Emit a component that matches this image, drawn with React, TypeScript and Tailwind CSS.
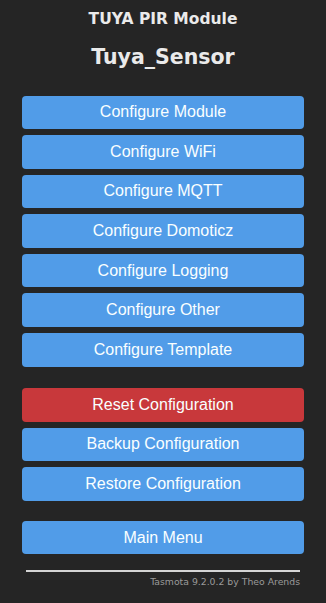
import React from 'react';

const configButtons = [
  'Configure Module',
  'Configure WiFi',
  'Configure MQTT',
  'Configure Domoticz',
  'Configure Logging',
  'Configure Other',
  'Configure Template',
];

const Btn = ({ label, red = false }: { label: string; red?: boolean }) => (
  <button
    className={`w-full h-[33.6px] rounded-[4px] text-[16px] text-[#faffff] ${
      red ? 'bg-[#c8383b]' : 'bg-[#519ce8]'
    }`}
    style={{ fontFamily: '"Liberation Sans", Arial, sans-serif' }}
  >
    {label}
  </button>
);

export default function App() {
  return (
    <div
      className="min-h-screen w-full bg-[#252525] text-[#eaeaea] px-[22px]"
      style={{ fontFamily: '"DejaVu Sans", Verdana, sans-serif' }}
    >
      <div className="flex flex-col items-center pt-[9px]">
        <h3 className="text-[15.5px] leading-[20px] font-bold">TUYA PIR Module</h3>
        <h2 className="mt-[15px] text-[20.5px] leading-[26px] font-bold">Tuya_Sensor</h2>
      </div>

      <div className="mt-[25.5px] flex flex-col gap-[6px]">
        {configButtons.map((b) => (
          <Btn key={b} label={b} />
        ))}
      </div>

      <div className="mt-[21.4px] flex flex-col gap-[6px]">
        <Btn label="Reset Configuration" red />
        <Btn label="Backup Configuration" />
        <Btn label="Restore Configuration" />
      </div>

      <div className="mt-[20px]">
        <Btn label="Main Menu" />
      </div>

      <div className="mx-[4px] mt-[15.5px] h-[2px] bg-[#d4d4d4]" />
      <div className="mx-[4px] mt-[4px] text-right text-[9.3px] leading-[12px] text-[#9a9a9a]">
        Tasmota 9.2.0.2 by Theo Arends
      </div>
    </div>
  );
}
